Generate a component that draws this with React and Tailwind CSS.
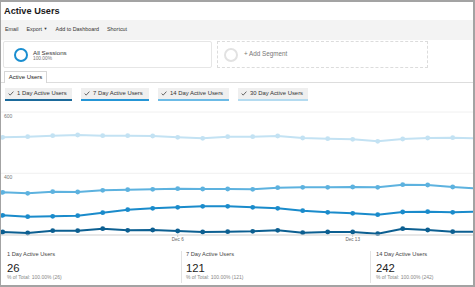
import React from 'react';

const series = [
  { name: '30 Day', color: '#c3e2f3', end: 138.3, ys: [137.3,136.7,135.7,135,135.7,135.7,136,137.3,138.3,136.7,136.7,136,138,138.7,139.3,141.3,139,138,137.7] },
  { name: '14 Day', color: '#5db2df', end: 188.3, ys: [192.3,193.3,191.7,192,190.3,189.7,189.3,188.7,189,189,189.3,187.7,187.3,187.3,187,187.3,184.7,185,187] },
  { name: '7 Day', color: '#1a8bcb', end: 211.7, ys: [215.3,216.7,216.3,215.7,212.7,209.7,208.3,207.3,206.3,206.3,207.3,208.3,210.7,212.3,213.3,214.7,212,211.7,212.3] },
  { name: '1 Day', color: '#0c5f91', end: 231.7, ys: [232,233,230.7,230.7,228.7,230.3,230,231,232,231.7,231.3,230.3,232.7,232,232,233.7,228.7,230,231.7] },
];

const chips = [
  { label: '1 Day Active Users', w: 'w-[67px]', line: 'border-[#1b6a9b]' },
  { label: '7 Day Active Users', w: 'w-[68px]', line: 'border-[#2596d6]' },
  { label: '14 Day Active Users', w: 'w-[71px]', line: 'border-[#6cbbe6]' },
  { label: '30 Day Active Users', w: 'w-[70px]', line: 'border-[#b4dbf0]' },
];

const totals = [
  { label: '1 Day Active Users', value: '26', w: 'w-[180px] pl-[6px]' },
  { label: '7 Day Active Users', value: '121', w: 'w-[189px] pl-[4px] border-l border-[#e3e3e3]' },
  { label: '14 Day Active Users', value: '242', w: 'flex-1 pl-[5px] border-l border-[#e3e3e3]' },
];

const Check = () => (
  <svg width="6" height="5" viewBox="0 0 6 5" className="shrink-0">
    <path d="M0.6 2.6 L2.2 4.1 L5.4 0.6" fill="none" stroke="#555" strokeWidth="0.9" />
  </svg>
);

const Chart = () => {
  const top = 101;
  const xs = (i) => 1.7 + 25 * i;
  return (
    <svg width="472" height="144" className="block">
      <line x1="0" x2="472" y1="11" y2="11" stroke="#f0f0f0" strokeWidth="1" />
      <line x1="0" x2="472" y1="72.3" y2="72.3" stroke="#f0f0f0" strokeWidth="1" />
      <text x="3" y="17" fontSize="5" fill="#777" fontFamily="Liberation Sans, Arial, sans-serif">600</text>
      <text x="3" y="78.3" fontSize="5" fill="#777" fontFamily="Liberation Sans, Arial, sans-serif">400</text>
      {series.map((s) => {
        const pts = s.ys.map((y, i) => `${xs(i)},${y - top}`);
        const d = `M0,${s.ys[0] - top + 0.3} L${pts.join(' L')} L472,${s.end - top}`;
        return (
          <g key={s.name}>
            <path d={d} fill="none" stroke={s.color} strokeWidth="2" strokeLinejoin="round" />
            {s.ys.map((y, i) => (
              <circle key={i} cx={xs(i)} cy={y - top} r="2.4" fill={s.color} />
            ))}
          </g>
        );
      })}
      <line x1="0" x2="472" y1="134" y2="134" stroke="#cfcfcf" strokeWidth="1" />
      <line x1="176.7" x2="176.7" y1="134" y2="136" stroke="#cfcfcf" strokeWidth="1" />
      <line x1="351.7" x2="351.7" y1="134" y2="136" stroke="#cfcfcf" strokeWidth="1" />
      <text x="176.7" y="140" fontSize="4.6" fill="#666" textAnchor="middle" fontFamily="Liberation Sans, Arial, sans-serif">Dec 6</text>
      <text x="351.7" y="140" fontSize="4.6" fill="#666" textAnchor="middle" fontFamily="Liberation Sans, Arial, sans-serif">Dec 13</text>
    </svg>
  );
};

const App = () => {
  return (
    <div className="w-[475px] h-[287px] bg-white overflow-hidden" style={{ fontFamily: '"Liberation Sans", Arial, sans-serif' }}>
      <div className="w-full h-full border-t-2 border-r-2 border-b-2 border-l border-[#a3a3a3] flex flex-col">

        <div className="h-[18px] flex items-center pl-[3px] pt-[2px] text-[9.2px] font-bold text-[#1a1a1a]">Active Users</div>

        <div className="h-[20px] bg-[#f3f3f3] flex items-center pl-[4px] text-[5.4px] text-[#333] gap-[8px] pb-[1px]">
          <span>Email</span>
          <span className="flex items-center gap-[1.5px]">Export <span className="text-[4px]">▼</span></span>
          <span>Add to Dashboard</span>
          <span>Shortcut</span>
        </div>

        <div className="h-[30px] flex pt-[1px] pl-[2px] gap-[5px]">
          <div className="w-[209px] h-[27px] border border-[#e6e6e6] rounded-[2px] flex items-center pl-[10px] gap-[5px]">
            <div className="w-[14px] h-[14px] rounded-full border-[2.5px] border-[#1a8ed0]"></div>
            <div className="flex flex-col">
              <span className="text-[6.2px] leading-[7px] text-[#333]">All Sessions</span>
              <span className="text-[4.8px] leading-[5px] text-[#777]">100.00%</span>
            </div>
          </div>
          <div className="w-[211px] h-[27px] border border-dashed border-[#dcdcdc] flex items-center pl-[6px] gap-[6px]">
            <div className="w-[14px] h-[14px] rounded-full border-[2.5px] border-[#e2e2e2]"></div>
            <span className="text-[6.3px] text-[#777] pb-[2px]">+ Add Segment</span>
          </div>
        </div>

        <div className="h-[13px] flex items-end pl-[3px] border-b border-[#dddddd]">
          <div className="h-[12px] w-[43px] border border-b-0 border-[#d6d6d6] rounded-t-[1px] bg-white flex items-center justify-center text-[6px] text-[#222] -mb-[1px]">Active Users</div>
        </div>

        <div className="h-[18px] flex items-end pl-[4px] gap-[9px]">
          {chips.map((c) => (
            <div key={c.label} className={`${c.w} h-[13px] bg-[#efefef] border-b-2 ${c.line} flex items-center pl-[3px] gap-[3px] text-[5.9px] text-[#333]`}>
              <Check />
              <span>{c.label}</span>
            </div>
          ))}
        </div>

        <Chart />

        <div className="flex-1 flex">
          {totals.map((t) => (
            <div key={t.label} className={`${t.w} mt-[6px] h-[32px] flex flex-col`}>
              <span className="text-[5.7px] leading-[7px] text-[#444]">{t.label}</span>
              <span className="mt-[4px] text-[11.3px] leading-[12px] text-[#222]">{t.value}</span>
              <span className="text-[5px] leading-[6px] text-[#888]">% of Total: 100.00% ({t.value})</span>
            </div>
          ))}
        </div>

      </div>
    </div>
  );
};

export default App;
